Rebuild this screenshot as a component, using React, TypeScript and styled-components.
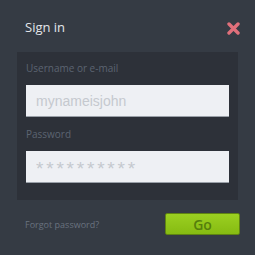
import styled, { createGlobalStyle } from 'styled-components';

const Global = createGlobalStyle`
  html, body {
    margin: 0;
    padding: 0;
    background: #353b44;
  }
  body {
    font-family: "Open Sans", "Liberation Sans", sans-serif;
  }
`;

const Dialog = styled.div`
  width: 255px;
  height: 255px;
  box-sizing: border-box;
  background: #353b44;
  padding: 17px 16px 0 17px;
  display: flex;
  flex-direction: column;
`;

const Header = styled.div`
  display: flex;
  align-items: center;
  justify-content: space-between;
  height: 20px;
  padding: 0 0 0 8px;
  margin-bottom: 15px;
`;

const Title = styled.h1`
  margin: 0;
  font-size: 13px;
  font-weight: 400;
  color: #e3e6ea;
`;

const Close = styled.button`
  border: none;
  background: none;
  padding: 0;
  width: 14px;
  height: 14px;
  display: flex;
  align-items: center;
  justify-content: center;
  margin-top: 2px;
  margin-right: -1px;
`;

const Panel = styled.div`
  background: #2d3139;
  padding: 10px 9px 17px 9px;
  display: flex;
  flex-direction: column;
  width: 221px;
  box-sizing: border-box;
`;

const Label = styled.label`
  font-size: 10px;
  color: #5c6471;
  margin: 0 0 11px 0;
  line-height: 12px;
`;

const Input = styled.input<{ $secret?: boolean }>`
  box-sizing: border-box;
  width: 203px;
  height: 32px;
  border: none;
  border-bottom: 1px solid #9aa0a8;
  background: #eef0f4;
  padding: ${({ $secret }) => ($secret ? '5px 10px 0' : '0 10px')};
  font-family: "Liberation Sans", Arial, sans-serif;
  font-size: ${({ $secret }) => ($secret ? '19px' : '14px')};
  letter-spacing: ${({ $secret }) => ($secret ? '2.8px' : '0')};
  color: #c5c9cf;
  outline: none;
  margin-bottom: 11px;

  &::placeholder {
    color: #c5c9cf;
  }
  &:last-child {
    margin-bottom: 0;
  }
`;

const Footer = styled.div`
  display: flex;
  align-items: center;
  justify-content: space-between;
  padding: 13px 0 0 8px;
`;

const Forgot = styled.a`
  font-size: 9px;
  color: #69727f;
  text-decoration: none;
`;

const GoButton = styled.button`
  width: 75px;
  height: 22px;
  border: 1px solid #5f8412;
  border-radius: 2px;
  background: linear-gradient(#9bd021, #86bb12);
  color: #557e0c;
  font-family: "Open Sans", "Liberation Sans", sans-serif;
  font-size: 14px;
  font-weight: 600;
  padding: 0;
  margin-right: -1px;
`;

export default function App() {
  return (
    <>
      <Global />
      <Dialog>
        <Header>
          <Title>Sign in</Title>
          <Close aria-label="close">
            <svg width="13" height="13" viewBox="0 0 13 13">
              <path d="M2 2 L11 11 M11 2 L2 11" stroke="#e0707b" strokeWidth="3.4" strokeLinecap="round" />
            </svg>
          </Close>
        </Header>
        <Panel>
          <Label>Username or e-mail</Label>
          <Input placeholder="mynameisjohn" />
          <Label>Password</Label>
          <Input $secret placeholder="**********" />
        </Panel>
        <Footer>
          <Forgot href="#">Forgot password?</Forgot>
          <GoButton>Go</GoButton>
        </Footer>
      </Dialog>
    </>
  );
}
